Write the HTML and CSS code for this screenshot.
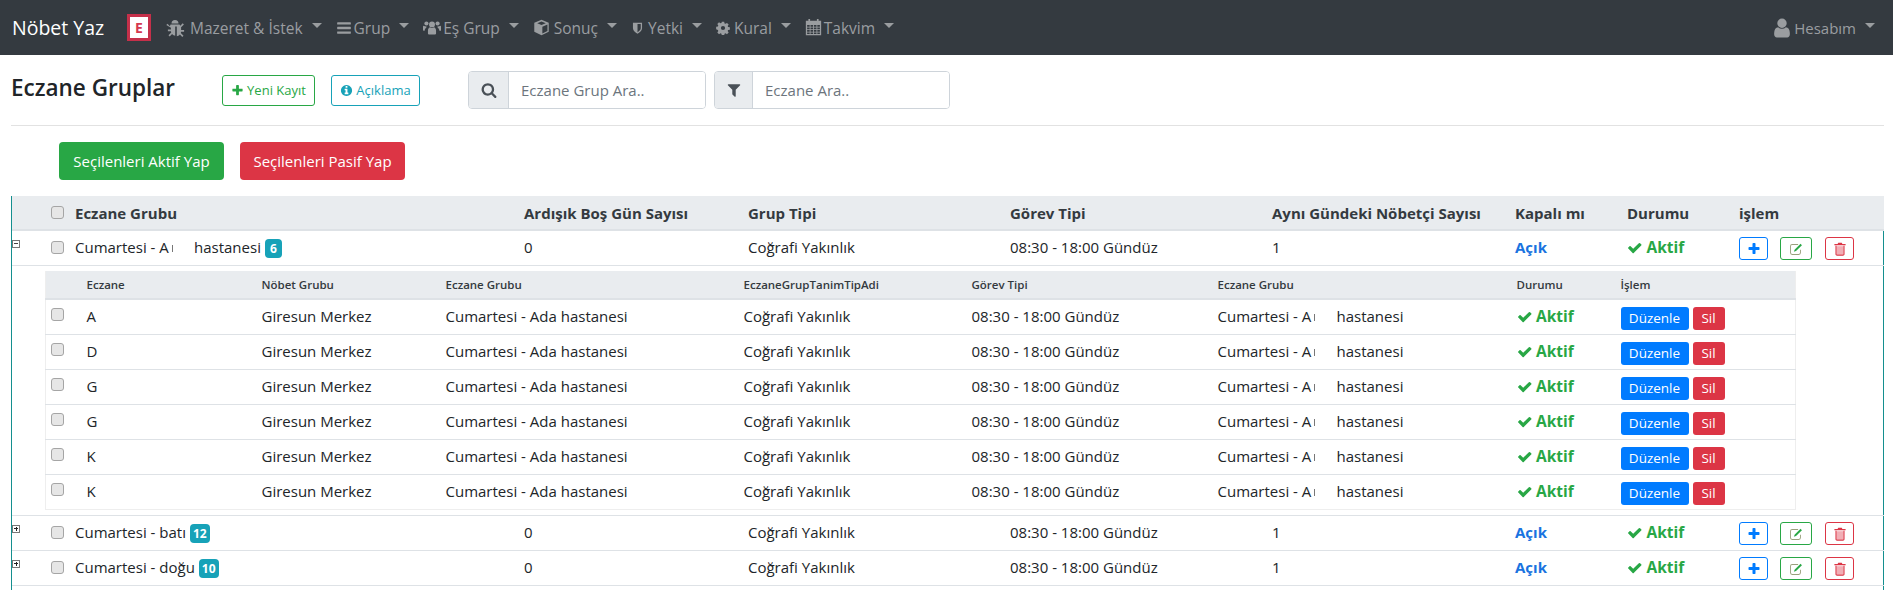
FILE: index.html
```html
<!DOCTYPE html>
<html>
  <head>
    <meta charset="utf-8">
    <title>Eczane Gruplar</title>
    <link rel="stylesheet" href="styles.css">
  </head>
  <body>
    <svg class="sprite" xmlns="http://www.w3.org/2000/svg">
      <symbol id="i-bug" viewBox="0 0 20 20"><path d="M6.500 5.500a3.500 3.500 0 0 1 7 0zM5.500 6.500h9l.8 1.200 2.400-2.400 1.200 1.200-2.800 2.800v2.700h3v1.700h-3l-.3 1.400 2.700 2.700-1.200 1.200-2.400-2.400c-.9 1-2 1.500-3.100 1.600V8.500h-1.600v9.200c-1.100-.1-2.200-.6-3.100-1.600l-2.400 2.400-1.200-1.200 2.700-2.700-.3-1.400h-3v-1.700h3V9.800L1.300 7l1.200-1.200 2.400 2.400z"/></symbol>
      <symbol id="i-bars" viewBox="0 0 1792 1792"><path d="M1664 1344v128q0 26-19 45t-45 19h-1408q-26 0-45-19t-19-45v-128q0-26 19-45t45-19h1408q26 0 45 19t19 45zm0-512v128q0 26-19 45t-45 19h-1408q-26 0-45-19t-19-45v-128q0-26 19-45t45-19h1408q26 0 45 19t19 45zm0-512v128q0 26-19 45t-45 19h-1408q-26 0-45-19t-19-45v-128q0-26 19-45t45-19h1408q26 0 45 19t19 45z"/></symbol>
      <symbol id="i-users" viewBox="0 0 20 20"><circle cx="10" cy="6" r="3.300"/><circle cx="3.800" cy="5" r="2.300"/><circle cx="16.200" cy="5" r="2.300"/><path d="M5.500 16v-3c0-2 1-3.300 2.200-3.700.7.500 1.400.7 2.300.7s1.600-.2 2.300-.7c1.200.4 2.200 1.700 2.200 3.700v3c0 .8-.8 1.200-1.500 1.200h-6c-.7 0-1.500-.4-1.500-1.200zM0 8.500c0-.6.200-1 .8-1 .8.600 1.800 1 3.200.9-.2 1-.2 1-.2 1-.9.500-1.800 1.700-2 3.600H.8c-.5 0-.8-.3-.8-.8zM20 8.500c0-.6-.2-1-.8-1-.8.600-1.800 1-3.200.9.200 1 .2 1 .2 1 .9.500 1.800 1.700 2 3.600h1.200c.5 0 .8-.3.8-.8z"/></symbol>
      <symbol id="i-cube" viewBox="0 0 20 20"><path d="M10 1l8.500 3.300v10.800L10 19l-8.500-3.900V4.300zM10 3L5 5l5 2 5-2zM11 17l6-2.800V6.600l-6 2.400z"/></symbol>
      <symbol id="i-shield" viewBox="0 0 20 20"><path d="M3 2h14v8.500c0 4-4 7-7 8.500-3-1.500-7-4.500-7-8.500zM10 4v12.500c2-1.100 5-3.300 5-6V4z"/></symbol>
      <symbol id="i-cog" viewBox="0 0 20 20"><path fill-rule="evenodd" d="M8.300 1h3.400l.5 2.500 1.400.6 2.100-1.400 2.400 2.400-1.400 2.100.6 1.400 2.500.5v3.400l-2.500.5-.6 1.400 1.400 2.100-2.400 2.400-2.100-1.400-1.400.6-.5 2.500H8.300l-.5-2.500-1.400-.6-2.100 1.400-2.400-2.400 1.400-2.100-.6-1.400L.2 11.700V8.300l2.500-.5.6-1.400-1.400-2.100 2.400-2.400 2.100 1.400 1.400-.6zM10 7a3 3 0 1 0 0 6 3 3 0 0 0 0-6z"/></symbol>
      <symbol id="i-calendar" viewBox="0 0 20 20"><path fill-rule="evenodd" d="M4 0h2v2h8V0h2v2h3v17H1V2h3zM2.500 7v2h3V7zm4 0v2h3V7zm4 0v2h3V7zm4 0v2h3V7zm-12 3v2h3v-2zm4 0v2h3v-2zm4 0v2h3v-2zm4 0v2h3v-2zm-12 3v2h3v-2zm4 0v2h3v-2zm4 0v2h3v-2zm4 0v2h3v-2zm-12 3v1.500h3V16zm4 0v1.500h3V16zm4 0v1.500h3V16zm4 0v1.500h3V16z"/></symbol>
      <symbol id="i-user" viewBox="0 0 1792 1792"><path d="M1536 1399q0 109-62.500 187t-150.500 78h-854q-88 0-150.500-78t-62.500-187q0-85 8.500-160.500t31.500-152 58.500-131 94-89 134.500-34.500q131 128 313 128t313-128q76 0 134.500 34.500t94 89 58.500 131 31.500 152 8.500 160.500zm-256-887q0 159-112.500 271.500t-271.500 112.500-271.500-112.500-112.500-271.500 112.500-271.500 271.500-112.500 271.500 112.500 112.500 271.500z"/></symbol>
      <symbol id="i-search" viewBox="0 0 1792 1792"><path d="M1216 832q0-185-131.500-316.500t-316.500-131.500-316.500 131.500-131.500 316.500 131.500 316.500 316.500 131.500 316.500-131.500 131.500-316.500zm512 832q0 52-38 90t-90 38q-54 0-90-38l-343-342q-179 124-399 124-143 0-273.500-55.500t-225-150-150-225-55.500-273.500 55.500-273.500 150-225 225-150 273.500-55.500 273.500 55.500 225 150 150 225 55.500 273.500q0 220-124 399l343 343q37 37 37 90z"/></symbol>
      <symbol id="i-filter" viewBox="0 0 1792 1792"><path d="M1595 295q17 41-14 70l-493 493v742q0 42-39 59-13 5-25 5-27 0-45-19l-256-256q-19-19-19-45v-486l-493-493q-31-29-14-70 17-39 59-39h1280q42 0 59 39z"/></symbol>
      <symbol id="i-plus" viewBox="0 0 1792 1792"><path d="M1600 736v192q0 40-28 68t-68 28h-416v416q0 40-28 68t-68 28h-192q-40 0-68-28t-28-68v-416h-416q-40 0-68-28t-28-68v-192q0-40 28-68t68-28h416v-416q0-40 28-68t68-28h192q40 0 68 28t28 68v416h416q40 0 68 28t28 68z"/></symbol>
      <symbol id="i-info" viewBox="0 0 1792 1792"><path d="M1152 1376v-160q0-14-9-23t-23-9h-96v-512q0-14-9-23t-23-9h-320q-14 0-23 9t-9 23v160q0 14 9 23t23 9h96v320h-96q-14 0-23 9t-9 23v160q0 14 9 23t23 9h448q14 0 23-9t9-23zm-128-896v-160q0-14-9-23t-23-9h-192q-14 0-23 9t-9 23v160q0 14 9 23t23 9h192q14 0 23-9t9-23zm640 416q0 209-103 385.500t-279.500 279.500-385.500 103-385.500-103-279.500-279.500-103-385.500 103-385.500 279.500-279.500 385.500-103 385.500 103 279.500 279.500 103 385.500z"/></symbol>
      <symbol id="i-check" viewBox="0 0 1792 1792"><path d="M1671 566q0 40-28 68l-724 724-136 136q-28 28-68 28t-68-28l-136-136-362-362q-28-28-28-68t28-68l136-136q28-28 68-28t68 28l294 295 656-657q28-28 68-28t68 28l136 136q28 28 28 68z"/></symbol>
      <symbol id="i-edit" viewBox="0 0 20 20"><path fill="#9aa07c" d="M4.500 3H13v1.300H4.500A1.700 1.700 0 0 0 2.800 6v9.500c0 .9.800 1.700 1.700 1.700H14c.9 0 1.700-.8 1.700-1.700V11H17v4.500a3 3 0 0 1-3 3H4.500a3 3 0 0 1-3-3V6a3 3 0 0 1 3-3z"/><path d="M16.500 2.500l2 2L10 13l-3 1 1-3z"/></symbol>
      <symbol id="i-trash" viewBox="0 0 20 20"><path opacity=".4" d="M4.500 6h11v12h-11z"/><path d="M7.500 1h5l1 2H18v1.600H2V3h4.500zM3.500 5.500H5V17c0 .5.300 1 .8 1h8.400c.5 0 .8-.5.800-1V5.500h1.500V17c0 1.400-1 2.500-2.300 2.500H5.800C4.500 19.500 3.500 18.400 3.500 17z"/></symbol>
    </svg>

    <nav class="navbar">
      <a class="brand">Nöbet Yaz</a>
      <span class="logo">E</span>
      <ul class="nav-list">
        <li class="nav-link"><svg class="icon nav-bug"><use href="#i-bug"/></svg>Mazeret &amp; İstek</li>
        <li class="nav-link"><svg class="icon nav-bars"><use href="#i-bars"/></svg>Grup</li>
        <li class="nav-link"><svg class="icon nav-users"><use href="#i-users"/></svg>Eş Grup</li>
        <li class="nav-link"><svg class="icon nav-cube"><use href="#i-cube"/></svg>Sonuç</li>
        <li class="nav-link"><svg class="icon nav-shield"><use href="#i-shield"/></svg>Yetki</li>
        <li class="nav-link"><svg class="icon nav-cog"><use href="#i-cog"/></svg>Kural</li>
        <li class="nav-link"><svg class="icon nav-calendar"><use href="#i-calendar"/></svg>Takvim</li>
      </ul>
      <div class="nav-link nav-account"><svg class="icon nav-user"><use href="#i-user"/></svg>Hesabım</div>
    </nav>

    <main class="content">
      <div class="page-head">
        <h1 class="page-title">Eczane Gruplar</h1>
        <a class="btn-outline btn-new"><svg class="icon"><use href="#i-plus"/></svg>Yeni Kayıt</a>
        <a class="btn-outline btn-about"><svg class="icon"><use href="#i-info"/></svg>Açıklama</a>
        <div class="search search-group">
          <span class="addon"><svg class="icon"><use href="#i-search"/></svg></span>
          <input class="search-input" placeholder="Eczane Grup Ara..">
        </div>
        <div class="search search-pharmacy">
          <span class="addon"><svg class="icon"><use href="#i-filter"/></svg></span>
          <input class="search-input" placeholder="Eczane Ara..">
        </div>
      </div>

      <div class="bulk-actions">
        <button class="btn-solid btn-green">Seçilenleri Aktif Yap</button>
        <button class="btn-solid btn-red">Seçilenleri Pasif Yap</button>
      </div>

      <div class="grid-wrap">
        <table class="grid">
          <colgroup>
            <col class="g0"><col class="g1"><col class="g2"><col class="g3"><col class="g4"><col class="g5"><col class="g6"><col class="g7"><col class="g8">
          </colgroup>
          <thead>
            <tr>
              <th><div class="lead"><input type="checkbox"></div></th>
              <th>Eczane Grubu</th>
              <th>Ardışık Boş Gün Sayısı</th>
              <th>Grup Tipi</th>
              <th>Görev Tipi</th>
              <th>Aynı Gündeki Nöbetçi Sayısı</th>
              <th>Kapalı mı</th>
              <th>Durumu</th>
              <th>işlem</th>
            </tr>
          </thead>
          <tbody>
            <tr>
              <td><div class="lead"><span class="toggle toggle-open"></span><input type="checkbox"></div></td>
              <td><span class="masked masked-main">Cumartesi - A</span>hastanesi <span class="badge">6</span></td>
              <td>0</td>
              <td>Coğrafi Yakınlık</td>
              <td>08:30 - 18:00 Gündüz</td>
              <td>1</td>
              <td class="open-state">Açık</td>
              <td class="active-state"><svg class="icon"><use href="#i-check"/></svg>Aktif</td>
              <td><div class="row-actions">
                <a class="btn-icon btn-add"><svg class="icon"><use href="#i-plus"/></svg></a>
                <a class="btn-icon btn-edit"><svg class="icon"><use href="#i-edit"/></svg></a>
                <a class="btn-icon btn-del"><svg class="icon"><use href="#i-trash"/></svg></a>
              </div></td>
            </tr>
            <tr class="detail-row">
              <td colspan="9">
                <table class="sub">
                  <colgroup>
                    <col class="s0"><col class="s1"><col class="s2"><col class="s3"><col class="s4"><col class="s5"><col class="s6"><col class="s7"><col class="s8">
                  </colgroup>
                  <thead>
                    <tr>
                      <th></th>
                      <th>Eczane</th>
                      <th>Nöbet Grubu</th>
                      <th>Eczane Grubu</th>
                      <th>EczaneGrupTanimTipAdi</th>
                      <th>Görev Tipi</th>
                      <th>Eczane Grubu</th>
                      <th>Durumu</th>
                      <th>İşlem</th>
                    </tr>
                  </thead>
                  <tbody>
                    <tr>
                      <td><input type="checkbox"></td><td>A</td><td>Giresun Merkez</td><td>Cumartesi - Ada hastanesi</td><td>Coğrafi Yakınlık</td><td>08:30 - 18:00 Gündüz</td>
                      <td><span class="masked masked-sub">Cumartesi - A</span>hastanesi</td>
                      <td class="active-state"><svg class="icon"><use href="#i-check"/></svg>Aktif</td>
                      <td><div class="sub-actions"><a class="btn-mini btn-blue">Düzenle</a><a class="btn-mini btn-red">Sil</a></div></td>
                    </tr>
                    <tr>
                      <td><input type="checkbox"></td><td>D</td><td>Giresun Merkez</td><td>Cumartesi - Ada hastanesi</td><td>Coğrafi Yakınlık</td><td>08:30 - 18:00 Gündüz</td>
                      <td><span class="masked masked-sub">Cumartesi - A</span>hastanesi</td>
                      <td class="active-state"><svg class="icon"><use href="#i-check"/></svg>Aktif</td>
                      <td><div class="sub-actions"><a class="btn-mini btn-blue">Düzenle</a><a class="btn-mini btn-red">Sil</a></div></td>
                    </tr>
                    <tr>
                      <td><input type="checkbox"></td><td>G</td><td>Giresun Merkez</td><td>Cumartesi - Ada hastanesi</td><td>Coğrafi Yakınlık</td><td>08:30 - 18:00 Gündüz</td>
                      <td><span class="masked masked-sub">Cumartesi - A</span>hastanesi</td>
                      <td class="active-state"><svg class="icon"><use href="#i-check"/></svg>Aktif</td>
                      <td><div class="sub-actions"><a class="btn-mini btn-blue">Düzenle</a><a class="btn-mini btn-red">Sil</a></div></td>
                    </tr>
                    <tr>
                      <td><input type="checkbox"></td><td>G</td><td>Giresun Merkez</td><td>Cumartesi - Ada hastanesi</td><td>Coğrafi Yakınlık</td><td>08:30 - 18:00 Gündüz</td>
                      <td><span class="masked masked-sub">Cumartesi - A</span>hastanesi</td>
                      <td class="active-state"><svg class="icon"><use href="#i-check"/></svg>Aktif</td>
                      <td><div class="sub-actions"><a class="btn-mini btn-blue">Düzenle</a><a class="btn-mini btn-red">Sil</a></div></td>
                    </tr>
                    <tr>
                      <td><input type="checkbox"></td><td>K</td><td>Giresun Merkez</td><td>Cumartesi - Ada hastanesi</td><td>Coğrafi Yakınlık</td><td>08:30 - 18:00 Gündüz</td>
                      <td><span class="masked masked-sub">Cumartesi - A</span>hastanesi</td>
                      <td class="active-state"><svg class="icon"><use href="#i-check"/></svg>Aktif</td>
                      <td><div class="sub-actions"><a class="btn-mini btn-blue">Düzenle</a><a class="btn-mini btn-red">Sil</a></div></td>
                    </tr>
                    <tr>
                      <td><input type="checkbox"></td><td>K</td><td>Giresun Merkez</td><td>Cumartesi - Ada hastanesi</td><td>Coğrafi Yakınlık</td><td>08:30 - 18:00 Gündüz</td>
                      <td><span class="masked masked-sub">Cumartesi - A</span>hastanesi</td>
                      <td class="active-state"><svg class="icon"><use href="#i-check"/></svg>Aktif</td>
                      <td><div class="sub-actions"><a class="btn-mini btn-blue">Düzenle</a><a class="btn-mini btn-red">Sil</a></div></td>
                    </tr>
                  </tbody>
                </table>
              </td>
            </tr>
            <tr>
              <td><div class="lead"><span class="toggle toggle-closed"></span><input type="checkbox"></div></td>
              <td>Cumartesi - batı <span class="badge">12</span></td>
              <td>0</td>
              <td>Coğrafi Yakınlık</td>
              <td>08:30 - 18:00 Gündüz</td>
              <td>1</td>
              <td class="open-state">Açık</td>
              <td class="active-state"><svg class="icon"><use href="#i-check"/></svg>Aktif</td>
              <td><div class="row-actions">
                <a class="btn-icon btn-add"><svg class="icon"><use href="#i-plus"/></svg></a>
                <a class="btn-icon btn-edit"><svg class="icon"><use href="#i-edit"/></svg></a>
                <a class="btn-icon btn-del"><svg class="icon"><use href="#i-trash"/></svg></a>
              </div></td>
            </tr>
            <tr>
              <td><div class="lead"><span class="toggle toggle-closed"></span><input type="checkbox"></div></td>
              <td>Cumartesi - doğu <span class="badge">10</span></td>
              <td>0</td>
              <td>Coğrafi Yakınlık</td>
              <td>08:30 - 18:00 Gündüz</td>
              <td>1</td>
              <td class="open-state">Açık</td>
              <td class="active-state"><svg class="icon"><use href="#i-check"/></svg>Aktif</td>
              <td><div class="row-actions">
                <a class="btn-icon btn-add"><svg class="icon"><use href="#i-plus"/></svg></a>
                <a class="btn-icon btn-edit"><svg class="icon"><use href="#i-edit"/></svg></a>
                <a class="btn-icon btn-del"><svg class="icon"><use href="#i-trash"/></svg></a>
              </div></td>
            </tr>
          </tbody>
        </table>
      </div>
    </main>
  </body>
</html>
```

FILE: styles.css
```css
html, body {
  margin: 0;
  padding: 0;
  height: 100%;
  overflow: hidden;
  background-color: #fff;
}
body {
  display: flex;
  flex-direction: column;
  font-family: "Open Sans", "Noto Sans", sans-serif;
  font-size: 15px;
  color: #212529;
}
.sprite {
  display: none;
}
.icon {
  width: 1em;
  height: 1em;
  fill: currentColor;
  flex: none;
}

/* navbar */
.navbar {
  display: flex;
  align-items: center;
  flex: none;
  height: 55px;
  padding: 0 18px 0 12px;
  background-color: #343a40;
  color: #9a9da0;
  font-size: 15.500px;
}
.brand {
  width: 115px;
  font-size: 19.500px;
  color: #fff;
}
.logo {
  display: flex;
  align-items: center;
  justify-content: center;
  box-sizing: border-box;
  width: 24px;
  height: 27px;
  border: 3px solid #c5304a;
  background-color: #fff;
  color: #d5384e;
  font-size: 14px;
  font-weight: 700;
}
.nav-list {
  display: flex;
  flex: 1;
  gap: 14px;
  margin: 0 0 0 14px;
  padding: 0;
  list-style: none;
}
.nav-link {
  display: flex;
  align-items: center;
  white-space: nowrap;
}
.nav-link::after {
  content: "";
  margin: 0 0 4px 9px;
  border-top: 5px solid;
  border-left: 5px solid transparent;
  border-right: 5px solid transparent;
}
.nav-link .icon {
  margin-right: 4px;
  font-size: 17px;
}
.nav-link .nav-bug {
  width: 20px;
  height: 20px;
  margin-right: 5px;
}
.nav-link .nav-bars {
  font-size: 16px;
  margin-right: 2px;
}
.nav-link .nav-users {
  width: 18px;
  height: 18px;
  margin-right: 2px;
}
.nav-link .nav-cube {
  font-size: 17px;
}
.nav-link .nav-shield {
  width: 13px;
  height: 14px;
}
.nav-link .nav-cog {
  font-size: 14px;
}
.nav-link .nav-calendar {
  margin-right: 2px;
}
.nav-account {
  font-size: 15px;
}
.nav-link .nav-user {
  width: 22px;
  height: 22px;
  margin-right: 1px;
}

/* page head */
.content {
  display: flex;
  flex: 1;
  flex-direction: column;
  min-height: 0;
  padding: 0 9px 0 11px;
}
.page-head {
  display: flex;
  align-items: center;
  flex: none;
  padding: 16px 0;
  border-bottom: 1px solid #e2e2e2;
}
.page-title {
  width: 211px;
  margin: 0 0 6px;
  font-size: 22.500px;
  font-weight: 600;
}
.btn-outline {
  display: flex;
  align-items: center;
  justify-content: center;
  gap: 3px;
  box-sizing: border-box;
  height: 31px;
  border: 1px solid;
  border-radius: 3px;
  font-size: 13px;
}
.btn-new {
  width: 93px;
  color: #28a745;
}
.btn-about {
  width: 89px;
  margin-left: 16px;
  color: #17a2b8;
}
.search {
  display: flex;
  box-sizing: border-box;
  height: 38px;
  border: 1px solid #ced4da;
  border-radius: 4px;
  overflow: hidden;
}
.search-group {
  width: 238px;
  margin-left: 48px;
}
.search-pharmacy {
  width: 236px;
  margin-left: 8px;
}
.addon {
  display: flex;
  align-items: center;
  justify-content: center;
  box-sizing: border-box;
  flex: none;
  width: 40px;
  border-right: 1px solid #ced4da;
  background-color: #e9ecef;
  color: #495057;
  font-size: 16px;
}
.search-pharmacy .addon {
  width: 38px;
}
.search-input {
  flex: 1;
  min-width: 0;
  padding: 0 12px;
  border: 0;
  outline: 0;
  font-family: inherit;
  font-size: 15px;
}
.search-input::placeholder {
  color: #6c757d;
}

/* bulk buttons */
.bulk-actions {
  display: flex;
  flex: none;
  gap: 16px;
  margin: 16px 0 16px 48px;
}
.btn-solid {
  box-sizing: border-box;
  width: 165px;
  height: 38px;
  padding: 0;
  border: 0;
  border-radius: 4px;
  color: #fff;
  font-family: inherit;
  font-size: 15px;
}
.btn-green {
  background-color: #28a745;
}
.btn-red {
  background-color: #dc3545;
}

/* main grid */
.grid-wrap {
  flex: 1;
  border-left: 1px solid #148f8f;
  border-right: 1px solid #148f8f;
}
table {
  border-collapse: collapse;
  table-layout: fixed;
}
.grid {
  width: 1872px;
}
.g0 { width: 63px; }
.g1 { width: 449px; }
.g2 { width: 224px; }
.g3 { width: 262px; }
.g4 { width: 262px; }
.g5 { width: 243px; }
.g6 { width: 112px; }
.g7 { width: 112px; }
.g8 { width: 145px; }
.grid > thead th {
  height: 33px;
  padding: 0;
  border-bottom: 2px solid #dee2e6;
  background-color: #e9ecef;
  color: #343a40;
  font-weight: 700;
  text-align: left;
}
.grid > tbody > tr > td {
  height: 32px;
  padding: 0 0 2px;
  border-bottom: 1px solid #dee2e6;
}
.lead {
  display: flex;
  align-items: center;
  justify-content: flex-end;
  position: relative;
  padding-right: 11px;
}
input[type="checkbox"] {
  appearance: none;
  box-sizing: border-box;
  width: 13px;
  height: 13px;
  margin: 0;
  border: 1px solid #a5a5a5;
  border-radius: 3px;
  background-color: #e6e6e6;
  display: block;
}
.toggle {
  position: absolute;
  top: -1px;
  left: 0;
  box-sizing: border-box;
  width: 8px;
  height: 8px;
  border: 1px solid #777;
  background: linear-gradient(#444, #444) center / 4px 1px no-repeat;
}
.toggle-closed {
  background:
    linear-gradient(#222, #222) center / 4px 1px no-repeat,
    linear-gradient(#222, #222) center / 1px 4px no-repeat;
}
/* the reference hides part of this name: a sliver of the next letter, then a gap */
.masked {
  display: inline-block;
  position: relative;
  white-space: nowrap;
}
.masked::after {
  content: "";
  position: absolute;
  right: 0;
  bottom: 5px;
  width: 1px;
  height: 7px;
  background-color: #777;
}
.masked-main {
  width: 98px;
  margin-right: 21px;
}
.masked-sub {
  width: 97px;
  margin-right: 22px;
}
.badge {
  display: inline-block;
  min-width: 17px;
  padding: 0 3px;
  box-sizing: border-box;
  border-radius: 4px;
  background-color: #17a2b8;
  color: #fff;
  font-size: 12px;
  font-weight: 700;
  line-height: 19px;
  text-align: center;
}
.open-state {
  color: #1a73e0;
  font-weight: 700;
}
.active-state {
  color: #28a745;
  font-size: 15.500px;
  font-weight: 700;
}
.active-state .icon {
  margin-right: 4px;
  vertical-align: -2px;
}
.row-actions {
  display: flex;
  gap: 12px;
  margin-top: 3px;
}
.btn-icon {
  display: flex;
  align-items: center;
  justify-content: center;
  box-sizing: border-box;
  height: 23px;
  border: 1px solid;
  border-radius: 3px;
  font-size: 14px;
}
.btn-add {
  width: 29px;
  color: #007bff;
}
.btn-edit {
  width: 32px;
  color: #28a745;
}
.btn-del {
  width: 29px;
  margin-left: 1px;
  color: #dc3545;
}

/* detail table */
.grid > tbody > .detail-row > td {
  height: auto;
  padding: 5px 0 5px 33px;
}
.sub {
  width: 1750px;
  border: 1px solid #eee;
  border-top: 0;
}
.s0 { width: 41px; }
.s1 { width: 175px; }
.s2 { width: 184px; }
.s3 { width: 298px; }
.s4 { width: 228px; }
.s5 { width: 246px; }
.s6 { width: 299px; }
.s7 { width: 104px; }
.s8 { width: 175px; }
.sub thead th {
  height: 27px;
  padding: 0;
  border-bottom: 2px solid #dee2e6;
  background-color: #e9ecef;
  color: #343a40;
  font-size: 11.500px;
  font-weight: 600;
  text-align: left;
}
.sub tbody td {
  height: 32px;
  padding: 0 0 2px;
  border-bottom: 1px solid #dee2e6;
}
.sub tbody tr:last-child td {
  border-bottom: 0;
}
.sub input[type="checkbox"] {
  margin: 0 0 3px 5px;
}
.sub-actions {
  display: flex;
  gap: 4px;
  margin-top: 4px;
}
.btn-mini {
  display: flex;
  align-items: center;
  justify-content: center;
  height: 23px;
  border-radius: 3px;
  color: #fff;
  font-size: 13.500px;
}
.btn-blue {
  width: 68px;
  background-color: #007bff;
}
.btn-mini.btn-red {
  width: 32px;
}
```
